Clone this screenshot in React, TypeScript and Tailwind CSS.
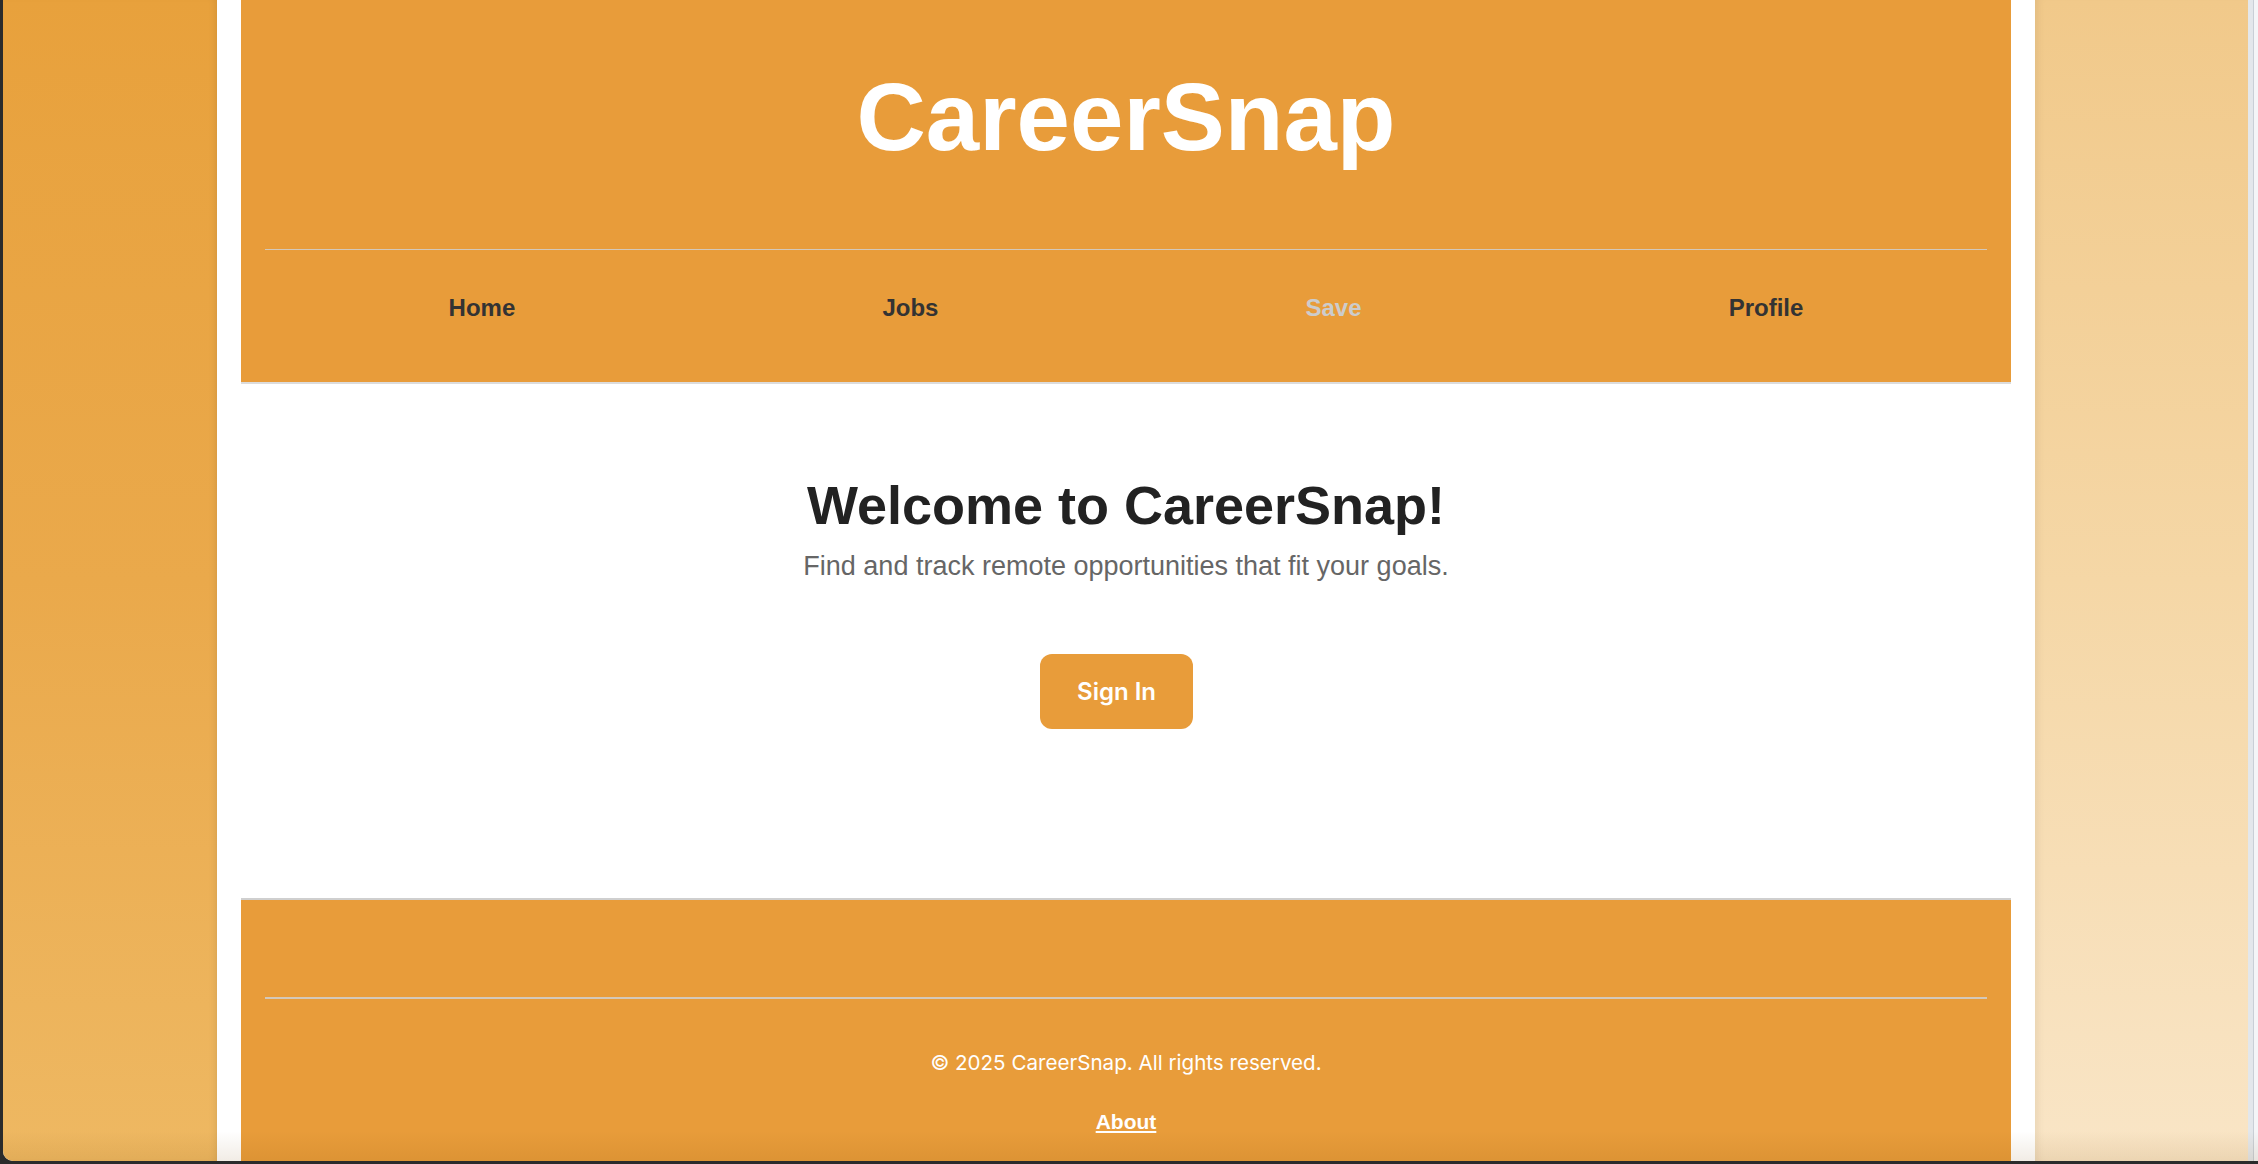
import React from "react";

const arial = { fontFamily: '"Liberation Sans", Arial, sans-serif' };
const inter = { fontFamily: 'Inter, "Liberation Sans", sans-serif' };

export default function App() {
  return (
    <div className="w-[2258px] h-[1164px] overflow-hidden bg-[#2b2b2b] pl-[3px]">
      <div className="relative flex h-[1161px] w-[2255px] overflow-hidden rounded-bl-[10px] bg-white">
        {/* left decorative panel */}
        <div className="w-[214px] h-full bg-gradient-to-b from-[#e8a13c] via-[#eaa94b] to-[#eeb862] shadow-[inset_-6px_0_8px_-6px_rgba(0,0,0,0.12)]" />

        {/* center column */}
        <div className="w-[1818px] h-full bg-white px-[24px]" style={arial}>
          <header className="bg-[#e89c3a] border-b-2 border-[#dcdcdc] h-[384px] px-[24px] pt-[62px]">
            <h1 className="text-center text-white font-bold text-[96px] leading-[110px]">CareerSnap</h1>
            <div className="mt-[77px] h-px bg-[#d3c8ba]" />
            <nav className="flex justify-around pt-[44px]">
              <a className="text-[24px] leading-[28px] font-bold text-[#333333]">Home</a>
              <a className="text-[24px] leading-[28px] font-bold text-[#333333]">Jobs</a>
              <a className="text-[24px] leading-[28px] font-bold text-[#cccccc]">Save</a>
              <a className="text-[24px] leading-[28px] font-bold text-[#333333]">Profile</a>
            </nav>
          </header>

          <main className="h-[514px] flex flex-col items-center pt-[89px]">
            <h2 className="text-[54px] leading-[64px] font-bold text-[#222222]">Welcome to CareerSnap!</h2>
            <p className="mt-[13px] text-[27px] leading-[32px] text-[#666666]">
              Find and track remote opportunities that fit your goals.
            </p>
            <button
              className="mt-[72px] mr-[19px] h-[75px] px-[37px] rounded-[12px] bg-[#e89c3a] text-white text-[24px] font-semibold flex items-center"
              style={inter}
            >
              Sign In
            </button>
          </main>

          <footer className="relative bg-[#e89c3a] border-t-2 border-[#cfcfcf] h-[300px] px-[24px] pt-[97px]">
            <div className="h-[2px] bg-[#d3c8ba]" />
            <p className="mt-[50px] text-center text-white text-[20.6px] leading-[28px]" style={inter}>
              © 2025 CareerSnap. All rights reserved.
            </p>
            <div className="mt-[31px] text-center">
              <a className="text-white font-bold underline text-[21px] leading-[28px]">About</a>
            </div>
          </footer>
        </div>

        {/* right decorative panel */}
        <div className="w-[213px] h-full bg-gradient-to-b from-[#f1c98a] via-[#f5d7a6] to-[#f9e5c6] shadow-[inset_8px_0_8px_-6px_rgba(0,0,0,0.08)]" />

        {/* right edge */}
        <div className="w-[10px] h-full bg-[#f4f5f7] flex">
          <div className="w-[5px] h-full bg-[#e3e7eb]" />
          <div className="w-px h-full bg-[#c9cfd6]" />
        </div>

        {/* bottom shadow overlay */}
        <div className="pointer-events-none absolute left-0 right-0 bottom-0 h-[30px] bg-gradient-to-b from-transparent to-[rgba(120,70,0,0.10)]" />
      </div>
    </div>
  );
}
